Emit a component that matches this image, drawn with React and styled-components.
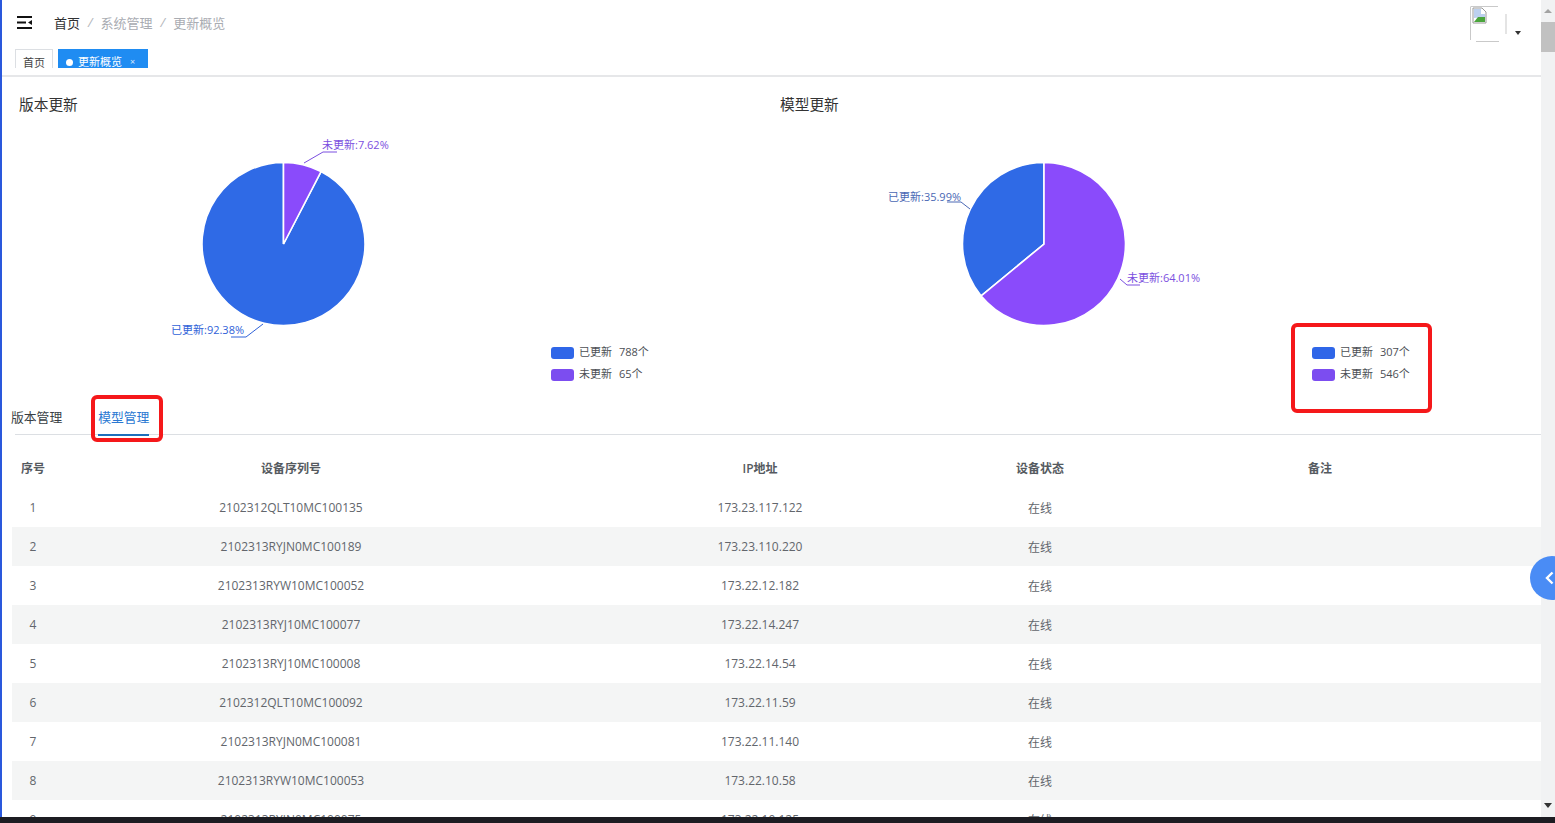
import React from 'react';
import styled, { createGlobalStyle } from 'styled-components';

const GlobalStyle = createGlobalStyle`
  html, body {
    margin: 0;
    padding: 0;
    height: 100%;
    overflow: hidden;
    background: #fff;
    font-family: 'Open Sans', 'Noto Sans CJK SC', sans-serif;
  }
  #root { height: 100%; }
`;

const Page = styled.div`
  height: 823px;
  display: flex;
  flex-direction: column;
`;

const Screen = styled.div`
  position: relative;
  flex: 1;
  min-height: 0;
  display: flex;
  overflow: hidden;
  border-left: 2px solid #2a58dc;
`;

const TaskStrip = styled.div`
  height: 6px;
  background: #1c1c22;
`;

const Main = styled.div`
  flex: 1;
  min-width: 0;
  overflow: hidden;
`;

const Header = styled.header`
  height: 47px;
  box-sizing: border-box;
  display: flex;
  align-items: center;
  padding: 0 20px 3px 15px;
`;

const Breadcrumb = styled.nav`
  display: flex;
  align-items: center;
  margin-left: 22px;
  font-size: 13px;
  color: #a9acb2;
`;

const Crumb = styled.span`
  color: ${props => (props.$home ? '#303133' : '#a9acb2')};
`;

const Slash = styled.span`
  margin: 0 8px;
  color: #b4b7bc;
  font-style: italic;
`;

const UserBox = styled.div`
  margin-left: auto;
  display: flex;
  align-items: flex-start;
  gap: 8px;
  padding-top: 4px;
`;

const Caret = styled.div`
  margin-top: 25px;
  width: 0;
  height: 0;
  border-left: 3.5px solid transparent;
  border-right: 3.5px solid transparent;
  border-top: 4px solid #333;
`;

const TagBar = styled.div`
  height: 30px;
  box-sizing: border-box;
  display: flex;
  align-items: flex-start;
  gap: 5px;
  padding: 2px 0 0 13px;
  border-bottom: 2px solid #e6e7e9;
`;

const Tag = styled.div`
  height: 19px;
  overflow: hidden;
  display: flex;
  align-items: flex-start;
  padding: ${props => (props.$active ? '5px 13px 0 8px' : '5px 7px 0')};
  box-sizing: border-box;
  gap: 5px;
  font-size: 11px;
  line-height: 16px;
  color: ${props => (props.$active ? '#fff' : '#444')};
  background: ${props => (props.$active ? '#1f8cf2' : '#fff')};
  border: ${props => (props.$active ? 'none' : '1px solid #dcdfe3')};
  border-bottom: none;
`;

const TagDot = styled.i`
  width: 7px;
  height: 7px;
  margin-top: 5px;
  border-radius: 50%;
  background: #fff;
`;

const TagClose = styled.span`
  margin-left: 3px;
  font-size: 9px;
  opacity: 0.8;
`;

const Charts = styled.section`
  display: flex;
`;

const ChartPanel = styled.div`
  width: 761px;
`;

const ChartTitle = styled.h3`
  margin: 0;
  height: 43px;
  box-sizing: border-box;
  padding: 17px 0 0 17px;
  font-size: 14.7px;
  line-height: 20px;
  font-weight: 400;
  color: #333;
`;

const ChartCanvas = styled.svg`
  display: block;
  width: 761px;
  height: 280px;
`;

const TabRow = styled.div`
  height: 36px;
  display: flex;
  gap: 36px;
  padding-left: 9px;
`;

const TabItem = styled.div`
  position: relative;
  z-index: 1;
  padding-top: 8px;
  box-sizing: border-box;
  font-size: 12.8px;
  line-height: 18px;
  color: ${props => (props.$active ? '#2a78d2' : '#3a3f45')};
  border-bottom: 2px solid ${props => (props.$active ? '#1e6fbc' : 'transparent')};
`;

const TabLine = styled.div`
  height: 1px;
  margin: -2px 0 0 13px;
  background: #dcdfe3;
`;

const Table = styled.div`
  margin: 13px 0 0 10px;
`;

const Row = styled.div`
  display: grid;
  grid-template-columns: 42px 474px 464px 96px 1fr;
  height: ${props => (props.$head ? '40px' : '39px')};
  align-items: center;
  font-size: 12px;
  font-weight: ${props => (props.$head ? 600 : 400)};
  color: ${props => (props.$head ? '#555a60' : '#62666c')};
  background: ${props => (props.$striped ? '#f4f5f5' : '#fff')};
`;

const Cell = styled.div`
  text-align: center;
  white-space: nowrap;
  padding-left: ${props => (props.$note ? '11px' : '0')};
`;

const ScrollBar = styled.div`
  width: 14px;
  display: flex;
  flex-direction: column;
  align-items: center;
  background: #f1f2f3;
`;

const ScrollArrow = styled.div`
  width: 0;
  height: 0;
  margin-top: ${props => (props.$down ? 'auto' : '9px')};
  margin-bottom: ${props => (props.$down ? '9px' : '0')};
  border-left: 4px solid transparent;
  border-right: 4px solid transparent;
  border-top: ${props => (props.$down ? '5px solid #333' : 'none')};
  border-bottom: ${props => (props.$down ? 'none' : '4px solid #a3a3a3')};
`;

const ScrollThumb = styled.div`
  width: 14px;
  height: 30px;
  margin-top: 9px;
  background: #c1c1c1;
`;

const FloatButton = styled.div`
  position: absolute;
  top: 556px;
  right: -19px;
  width: 44px;
  height: 44px;
  border-radius: 50%;
  background: #4a8cf5;
  display: flex;
  align-items: center;
  padding-left: 15px;
  box-sizing: border-box;
`;

const Highlight = styled.div`
  position: absolute;
  left: ${props => props.$x}px;
  top: ${props => props.$y}px;
  width: ${props => props.$w}px;
  height: ${props => props.$h}px;
  box-sizing: border-box;
  border: 4px solid #f5181a;
  border-radius: 6px;
`;

const BLUE = '#2f6ae6';
const PURPLE = '#8a4bfb';
const CY = 244;
const R = 81.5;

// slice path, angles in degrees clockwise from 12 o'clock
const slice = (cx, from, to) => {
  const p = a => {
    const rad = (a * Math.PI) / 180;
    return `${cx + R * Math.sin(rad)} ${CY - R * Math.cos(rad)}`;
  };
  return `M${cx} ${CY} L${p(from)} A${R} ${R} 0 ${to - from > 180 ? 1 : 0} 1 ${p(to)} Z`;
};

const charts = [
  {
    title: '版本更新',
    originX: 2,
    cx: 283.5,
    notUpdated: 7.62,
    labels: [
      { text: '未更新:7.62%', x: 322, y: 149, color: '#7b4fe0', line: '304,163 323,152 337,152' },
      { text: '已更新:92.38%', x: 171, y: 334, color: '#2f62d8', line: '263,324 246,337 231,337' },
    ],
    legend: { x: 551, updated: '788个', pending: '65个' },
  },
  {
    title: '模型更新',
    originX: 763,
    cx: 1044,
    notUpdated: 64.01,
    labels: [
      { text: '已更新:35.99%', x: 888, y: 201, color: '#4a68b4', line: '970,209 961,202 947,202' },
      { text: '未更新:64.01%', x: 1127, y: 282, color: '#7b4fe0', line: '1120,279 1127,285 1140,285' },
    ],
    legend: { x: 1312, updated: '307个', pending: '546个' },
  },
];

const rows = [
  ['1', '2102312QLT10MC100135', '173.23.117.122'],
  ['2', '2102313RYJN0MC100189', '173.23.110.220'],
  ['3', '2102313RYW10MC100052', '173.22.12.182'],
  ['4', '2102313RYJ10MC100077', '173.22.14.247'],
  ['5', '2102313RYJ10MC100008', '173.22.14.54'],
  ['6', '2102312QLT10MC100092', '173.22.11.59'],
  ['7', '2102313RYJN0MC100081', '173.22.11.140'],
  ['8', '2102313RYW10MC100053', '173.22.10.58'],
  ['9', '2102313RYJN0MC100075', '173.22.10.125'],
];

const MenuIcon = () => (
  <svg width="15" height="13" viewBox="0 0 15 13">
    <path d="M0 1h15M0 6.5h9M0 12h15" stroke="#111" strokeWidth="1.8" fill="none" />
    <path d="M11 6.5 15 4v5z" fill="#111" />
  </svg>
);

const BrokenAvatar = () => (
  <svg width="37" height="37" viewBox="0 0 37 37">
    <path d="M0.5 0.5V34M1 0.5H28M36 8V28M6 35.5H29" stroke="#c9c9c9" fill="none" />
    <path d="M3 2h9l4 4v11H3z" fill="#fff" stroke="#9a9a9a" />
    <path d="M4 3h7v5h4v3l-11 1z" fill="#bcd0ee" />
    <path d="M4 16l4-5 7 0v5z" fill="#4aa53c" />
  </svg>
);

const Chevron = () => (
  <svg width="9" height="14" viewBox="0 0 9 14">
    <path d="M7.5 1.5 2 7l5.5 5.5" stroke="#fff" strokeWidth="2.4" fill="none" />
  </svg>
);

const PieChart = ({ chart }) => {
  const { originX, cx, notUpdated, labels, legend } = chart;
  const split = (notUpdated / 100) * 360;
  return (
    <ChartCanvas viewBox={`${originX} 120 761 280`}>
      <path d={slice(cx, split, 360)} fill={BLUE} stroke="#fff" strokeWidth="1.6" />
      <path d={slice(cx, 0, split)} fill={PURPLE} stroke="#fff" strokeWidth="1.6" />
      {labels.map(l => (
        <g key={l.text}>
          <polyline points={l.line} fill="none" stroke={l.color} strokeWidth="1" />
          <text x={l.x} y={l.y} fontSize="11" fill={l.color}>{l.text}</text>
        </g>
      ))}
      <rect x={legend.x} y="347" width="23" height="12" rx="3" fill="#2f66e8" />
      <text x={legend.x + 28} y="356" fontSize="11" fill="#4c4f55">已更新</text>
      <text x={legend.x + 68} y="356" fontSize="11" fill="#4c4f55">{legend.updated}</text>
      <rect x={legend.x} y="369" width="23" height="12" rx="3" fill="#7c4df0" />
      <text x={legend.x + 28} y="378" fontSize="11" fill="#4c4f55">未更新</text>
      <text x={legend.x + 68} y="378" fontSize="11" fill="#4c4f55">{legend.pending}</text>
    </ChartCanvas>
  );
};

const App = () => (
  <Page>
    <GlobalStyle />
    <Screen>
      <Main>
        <Header>
          <MenuIcon />
          <Breadcrumb>
            <Crumb $home>首页</Crumb>
            <Slash>/</Slash>
            <Crumb>系统管理</Crumb>
            <Slash>/</Slash>
            <Crumb>更新概览</Crumb>
          </Breadcrumb>
          <UserBox>
            <BrokenAvatar />
            <Caret />
          </UserBox>
        </Header>
        <TagBar>
          <Tag>首页</Tag>
          <Tag $active>
            <TagDot />
            更新概览
            <TagClose>×</TagClose>
          </Tag>
        </TagBar>
        <Charts>
          {charts.map(chart => (
            <ChartPanel key={chart.title}>
              <ChartTitle>{chart.title}</ChartTitle>
              <PieChart chart={chart} />
            </ChartPanel>
          ))}
        </Charts>
        <TabRow>
          <TabItem>版本管理</TabItem>
          <TabItem $active>模型管理</TabItem>
        </TabRow>
        <TabLine />
        <Table>
          <Row $head>
            <Cell>序号</Cell>
            <Cell>设备序列号</Cell>
            <Cell>IP地址</Cell>
            <Cell>设备状态</Cell>
            <Cell $note>备注</Cell>
          </Row>
          {rows.map(([no, serial, ip], i) => (
            <Row key={no} $striped={i % 2 === 1}>
              <Cell>{no}</Cell>
              <Cell>{serial}</Cell>
              <Cell>{ip}</Cell>
              <Cell>在线</Cell>
              <Cell $note />
            </Row>
          ))}
        </Table>
      </Main>
      <ScrollBar>
        <ScrollArrow />
        <ScrollThumb />
        <ScrollArrow $down />
      </ScrollBar>
      <FloatButton>
        <Chevron />
      </FloatButton>
      <Highlight $x={89} $y={395} $w={72} $h={47} />
      <Highlight $x={1289} $y={323} $w={141} $h={90} />
    </Screen>
    <TaskStrip />
  </Page>
);

export default App;
